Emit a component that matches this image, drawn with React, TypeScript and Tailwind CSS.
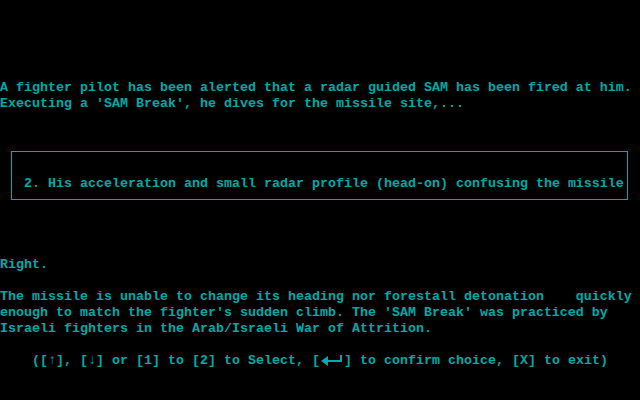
import React from "react";

const Row = ({ children, className = "" }: { children?: React.ReactNode; className?: string }) => (
  <div className={"h-4 whitespace-pre " + className}>{children}</div>
);

const EnterGlyph = () => (
  <svg width="24" height="16" viewBox="0 0 24 16" className="inline-block align-top" fill="#00aaaa">
    <polygon points="1,8 8,3 8,13" />
    <rect x="8" y="7" width="14" height="2" />
    <rect x="20" y="2" width="2" height="7" />
  </svg>
);

export default function App() {
  return (
    <div
      className="w-[640px] h-[400px] bg-black text-[#00aaaa] font-bold overflow-hidden pt-[80px]"
      style={{ fontFamily: '"Liberation Mono", "DejaVu Sans Mono", monospace', fontSize: "13.333px", lineHeight: "16px" }}
    >
      <Row>A fighter pilot has been alerted that a radar guided SAM has been fired at him.</Row>
      <Row>Executing a 'SAM Break', he dives for the missile site,...</Row>
      <div className="h-[39px]" />
      <div className="ml-[11px] w-[617px] h-[49px] border border-[#00aaaa] pt-[24px] pl-[12px]">
        <Row>2. His acceleration and small radar profile (head-on) confusing the missile</Row>
      </div>
      <div className="h-[57px]" />
      <Row>Right.</Row>
      <Row />
      <Row>The missile is unable to change its heading nor forestall detonation    quickly</Row>
      <Row>enough to match the fighter's sudden climb. The 'SAM Break' was practiced by</Row>
      <Row>Israeli fighters in the Arab/Israeli War of Attrition.</Row>
      <Row />
      <Row>
        {"    ([↑], [↓] or [1] to [2] to Select, ["}
        <EnterGlyph />
        {"] to confirm choice, [X] to exit)"}
      </Row>
    </div>
  );
}
